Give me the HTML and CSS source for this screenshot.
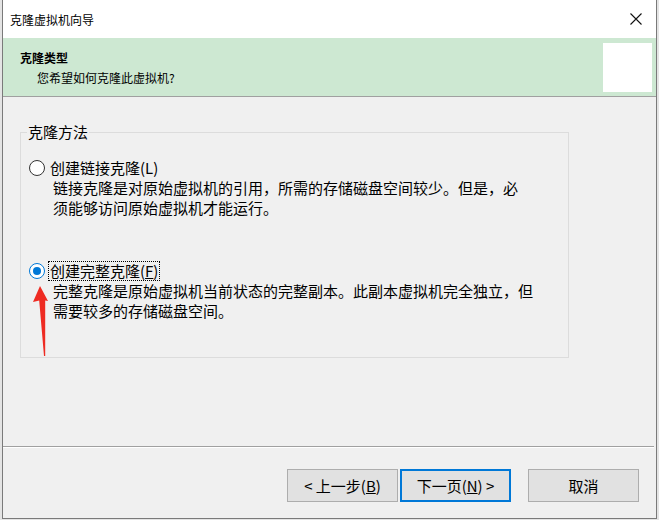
FILE: index.html
```html
<!DOCTYPE html>
<html lang="zh-CN">
<head>
<meta charset="utf-8">
<title>克隆虚拟机向导</title>
<link rel="stylesheet" href="styles.css">
</head>
<body>
<div class="window">
  <div class="titlebar">
    <span class="title">克隆虚拟机向导</span>
    <svg class="close" width="12" height="12" viewBox="0 0 12 12"><path d="M0.5 0.5 L11.5 11.5 M11.5 0.5 L0.5 11.5" stroke="#111" stroke-width="1.1" fill="none"/></svg>
  </div>
  <div class="header">
    <div class="header-text">
      <div class="heading">克隆类型</div>
      <div class="subtitle">您希望如何克隆此虚拟机?</div>
    </div>
    <div class="header-icon"></div>
  </div>
  <div class="content">
    <div class="main">
      <fieldset class="group">
        <legend>克隆方法</legend>
        <div class="option first">
          <span class="radio"></span>
          <span class="label">创建链接克隆(L)</span>
        </div>
        <div class="desc">链接克隆是对原始虚拟机的引用，所需的存储磁盘空间较少。但是，必<br>须能够访问原始虚拟机才能运行。</div>
        <div class="option second">
          <span class="radio checked"></span>
          <span class="label focus">创建完整克隆(<u>F</u>)</span>
        </div>
        <div class="desc">完整克隆是原始虚拟机当前状态的完整副本。此副本虚拟机完全独立，但<br>需要较多的存储磁盘空间。</div>
      </fieldset>
      <svg class="arrow" width="20" height="80" viewBox="30 282 20 80"><polygon points="40,286 48,301 45.2,300.5 45.2,356 44,356 39.2,300.5 33,302" fill="#ee2b22"/></svg>
    </div>
    <div class="footer">
      <button class="btn">&lt; 上一步(<u>B</u>)</button>
      <button class="btn primary">下一页(<u>N</u>) &gt;</button>
      <button class="btn cancel">取消</button>
    </div>
  </div>
</div>
</body>
</html>
```
FILE: styles.css
```css
* { box-sizing: border-box; }
html, body { margin: 0; padding: 0; }
body {
  background: #e4e4e4;
  width: 659px;
  height: 520px;
  overflow: hidden;
  font-family: "Noto Sans CJK SC", "Microsoft YaHei", sans-serif;
  color: #000;
}
.window {
  margin-left: 2px;
  width: 655px;
  height: 519px;
  border-left: 1px solid #7a7a7a;
  border-right: 1px solid #7a7a7a;
  border-bottom: 1px solid #7a7a7a;
  display: flex;
  flex-direction: column;
  background: #f0f0f0;
}
.titlebar {
  height: 38px;
  background: #fff;
  display: flex;
  align-items: center;
  justify-content: space-between;
  padding: 1px 14px 0 7px;
}
.title { font-size: 12px; line-height: 16px; }
.close { display: block; margin-top: -1px; }
.header {
  height: 59px;
  background: #cde8d2;
  border-bottom: 1px solid #a0a0a0;
  display: flex;
  justify-content: space-between;
  padding: 0 4px 0 17px;
}
.header-text { padding-top: 10px; }
.heading { font-size: 12px; font-weight: bold; line-height: 20px; }
.subtitle { font-size: 12px; line-height: 20px; padding-left: 17px; }
.header-icon {
  width: 49px;
  height: 49px;
  background: #fff;
  margin-top: 5px;
}
.content {
  flex: 1;
  display: flex;
  flex-direction: column;
}
.main {
  height: 349px;
  position: relative;
  padding: 25px 0 0 17px;
}
.group {
  margin: 0;
  width: 549px;
  height: 236px;
  border: 1px solid #dcdcdc;
  padding: 0 0 0 8px;
  font-size: 15px;
}
.group legend {
  padding: 0 1px;
  margin-left: -2px;
  line-height: 20px;
  font-size: 15px;
}
.option {
  display: flex;
  align-items: center;
  height: 20px;
}
.option.first { margin-top: 16px; }
.option.second { margin-top: 43px; }
.radio {
  width: 16px;
  height: 16px;
  border-radius: 50%;
  border: 1px solid #333;
  background: #fff;
  display: flex;
  align-items: center;
  justify-content: center;
  flex: none;
}
.radio.checked { border-color: #0078d7; }
.radio.checked::after {
  content: "";
  width: 8px;
  height: 8px;
  border-radius: 50%;
  background: #0078d7;
}
.label {
  margin-left: 3px;
  border: 1px dotted transparent;
  padding: 0 1px;
  line-height: 18px;
  white-space: nowrap;
}
.label.focus { border-color: #000; }
.desc {
  margin-left: 24px;
  line-height: 20px;
  white-space: nowrap;
}
.arrow {
  position: absolute;
  left: 27px;
  top: 185px;
}
.footer {
  margin-right: 2px;
  border-top: 1px solid #a0a0a0;
  box-shadow: inset 0 1px 0 #fff;
  padding: 22px 15px 16px 0;
  display: flex;
  justify-content: flex-end;
}
.btn {
  width: 111px;
  height: 33px;
  background: #e1e1e1;
  border: 1px solid #adadad;
  font-family: "Noto Sans CJK SC", sans-serif;
  font-size: 15px;
  color: #000;
  padding: 0;
  margin: 0;
}
.btn.primary { border: 2px solid #0078d7; margin-left: 2px; }
.btn.cancel { margin-left: 17px; }
```
